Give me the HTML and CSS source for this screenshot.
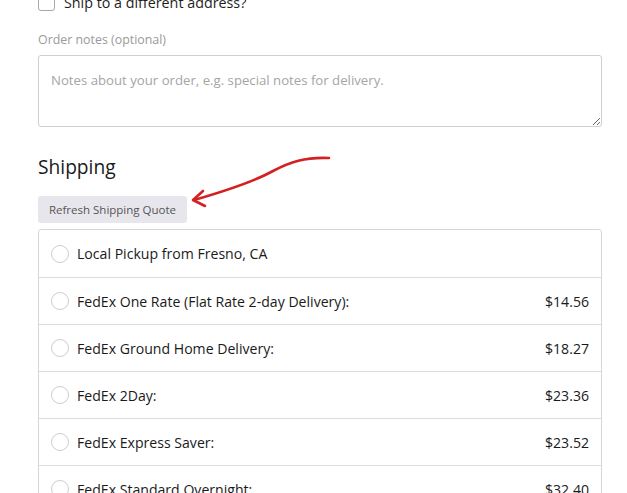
FILE: index.html
```html
<!DOCTYPE html>
<html>
<head>
<meta charset="utf-8">
<link rel="stylesheet" href="styles.css">
</head>
<body>
<div class="page">
  <label class="ship-diff"><span class="checkbox"></span><span>Ship to a different address?</span></label>
  <div class="notes-label">Order notes (optional)</div>
  <textarea class="notes" placeholder="Notes about your order, e.g. special notes for delivery."></textarea>
  <h3 class="heading">Shipping</h3>
  <button class="refresh">Refresh Shipping Quote</button>
  <ul class="methods">
    <li class="method"><span class="radio"></span><span class="name">Local Pickup from Fresno, CA</span></li>
    <li class="method"><span class="radio"></span><span class="name">FedEx One Rate (Flat Rate 2-day Delivery):</span><span class="price">$14.56</span></li>
    <li class="method"><span class="radio"></span><span class="name">FedEx Ground Home Delivery:</span><span class="price">$18.27</span></li>
    <li class="method"><span class="radio"></span><span class="name">FedEx 2Day:</span><span class="price">$23.36</span></li>
    <li class="method"><span class="radio"></span><span class="name">FedEx Express Saver:</span><span class="price">$23.52</span></li>
    <li class="method"><span class="radio"></span><span class="name">FedEx Standard Overnight:</span><span class="price">$32.40</span></li>
  </ul>
  <svg class="arrow" width="627" height="493" viewBox="0 0 627 493">
    <path d="M329 158 C 305 157, 290 162, 273 171 C 255 181, 232 189, 194 200" fill="none" stroke="#d32020" stroke-width="2.6" stroke-linecap="round"/>
    <path d="M203 191 L 193 200 L 205 206" fill="none" stroke="#d32020" stroke-width="2.6" stroke-linecap="round" stroke-linejoin="round"/>
  </svg>
</div>
</body>
</html>
```
FILE: styles.css
```css
html, body {
  margin: 0;
  padding: 0;
  background: #fff;
}
.page {
  font-family: "Open Sans", "Noto Sans", sans-serif;
  color: #1e1e1e;
  padding: 0 25px 0 38px;
  width: 564px;
  height: 493px;
  overflow: hidden;
}
.ship-diff {
  display: flex;
  align-items: center;
  gap: 9px;
  margin-top: -9px;
  height: 22px;
  font-size: 14.3px;
}
.checkbox {
  width: 15px;
  height: 15px;
  border: 1px solid #a8a8a8;
  border-radius: 3px;
  background: #fff;
}
.notes-label {
  margin-top: 18px;
  font-size: 12.4px;
  color: #9a9a9a;
  line-height: 18px;
}
.notes {
  display: block;
  box-sizing: border-box;
  margin-top: 6px;
  width: 564px;
  height: 72px;
  border: 1px solid #cfcfcf;
  border-radius: 3px;
  padding: 15px 12px;
  font-family: "Open Sans", "Noto Sans", sans-serif;
  font-size: 13.2px;
  color: #333;
  resize: vertical;
}
.notes::placeholder {
  color: #a5a5a5;
}
.heading {
  margin: 27px 0 0;
  font-size: 19.2px;
  font-weight: 400;
  line-height: 26px;
  color: #1a1a1a;
}
.refresh {
  display: block;
  margin-top: 16px;
  height: 27px;
  width: 149px;
  padding: 0;
  border: none;
  border-radius: 3px;
  background: #e8e6ed;
  color: #555;
  font-family: "Open Sans", "Noto Sans", sans-serif;
  font-size: 11.5px;
}
.methods {
  list-style: none;
  margin: 6px 0 0;
  padding: 0;
  border: 1px solid #d6d6d6;
  border-radius: 3px;
}
.method {
  display: flex;
  align-items: center;
  box-sizing: border-box;
  height: 47px;
  padding: 0 12px 0 12px;
  border-top: 1px solid #dcdcdc;
  font-size: 14.1px;
  color: #1a1a1a;
}
.method:first-child {
  border-top: none;
  height: 47px;
}
.radio {
  width: 16px;
  height: 16px;
  border: 1px solid #cdcdcd;
  border-radius: 50%;
  margin-right: 8px;
  flex: none;
}
.name {
  flex: 1;
}
.price {
  flex: none;
}
.arrow {
  position: absolute;
  left: 0;
  top: 0;
  pointer-events: none;
}
```
